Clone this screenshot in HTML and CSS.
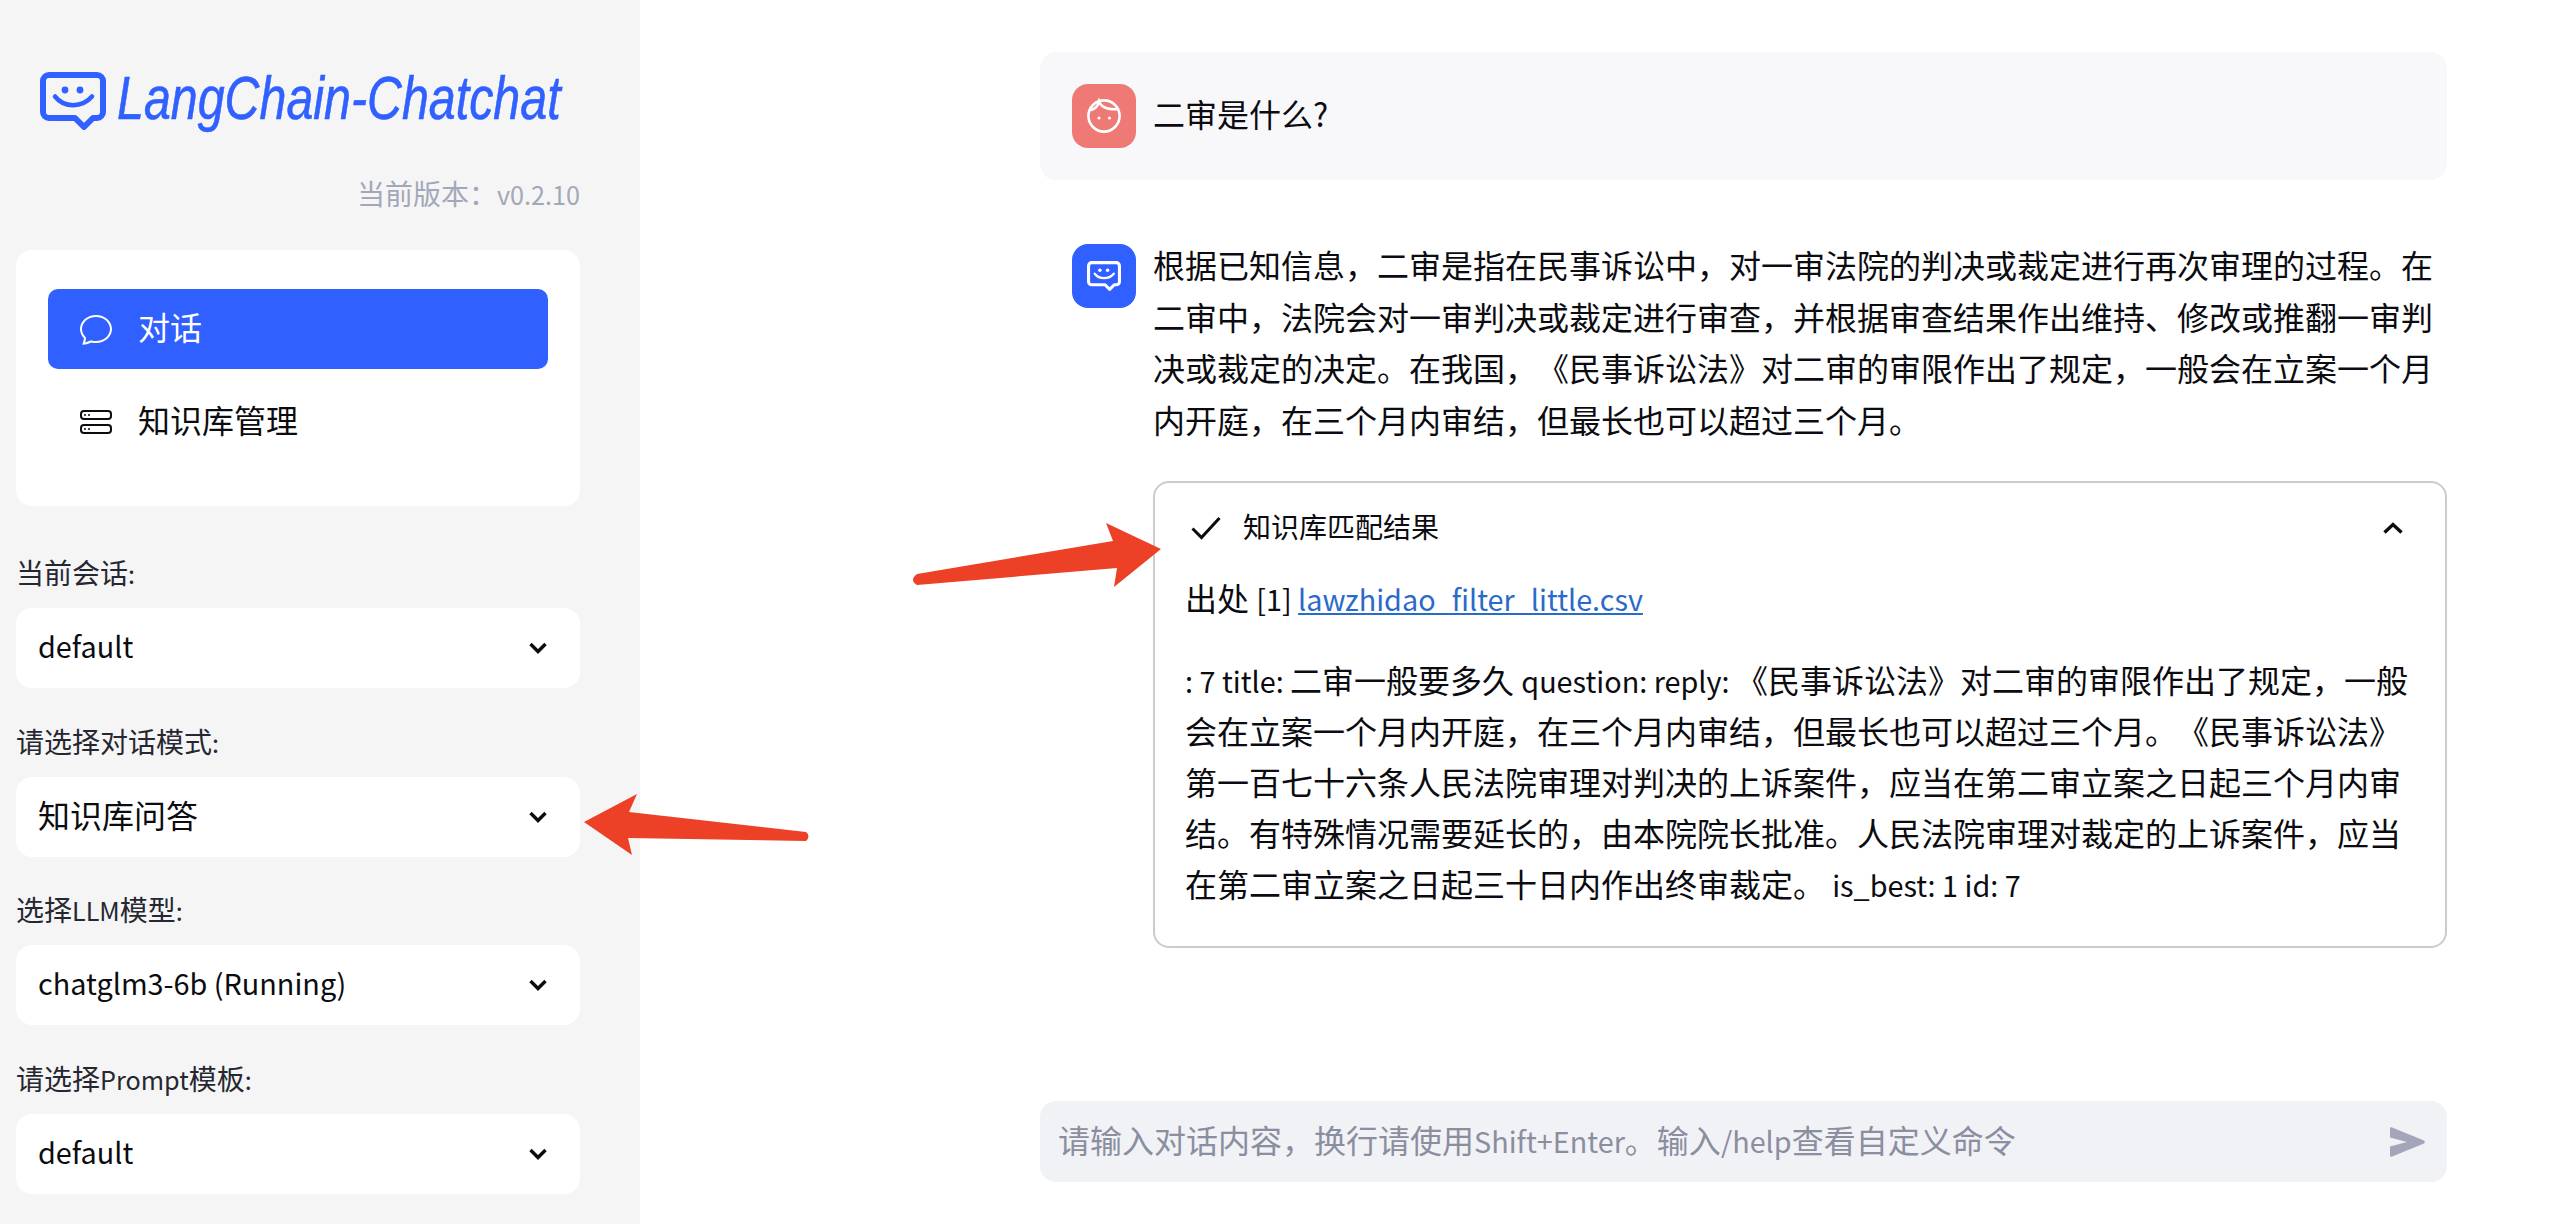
FILE: index.html
```html
<!DOCTYPE html>
<html lang="zh-CN">

<head>
    <meta charset="UTF-8">
    <title>LangChain-Chatchat</title>
    <link rel="stylesheet" href="styles.css">
</head>

<body>
    <svg class="defs" width="0" height="0">
        <symbol id="bot" viewBox="0 0 66 58">
            <path d="M9 3H57a6 6 0 0 1 6 6V40a6 6 0 0 1-6 6H53L44 55L35 46H9a6 6 0 0 1-6-6V9a6 6 0 0 1 6-6Z" fill="none" stroke="currentColor" stroke-width="6" stroke-linejoin="round"/>
            <circle cx="25" cy="18" r="3.4" fill="currentColor"/>
            <circle cx="40" cy="18" r="3.4" fill="currentColor"/>
            <path d="M15 24.5C24 36 42 36 52 24.5" fill="none" stroke="currentColor" stroke-width="4.5" stroke-linecap="round"/>
        </symbol>
        <symbol id="down" viewBox="0 0 20 14">
            <path d="M2.5 3L10 10.5L17.5 3" fill="none" stroke="currentColor" stroke-width="3.4"/>
        </symbol>
    </svg>

    <div class="app">
        <aside class="sidebar">
            <div class="logo">
                <svg class="logo-icon"><use href="#bot"/></svg>
                <span class="logo-text">LangChain-Chatchat</span>
            </div>
            <p class="version">当前版本：<span class="lat">v0.2.10</span></p>

            <nav class="nav-card">
                <a class="nav-item active">
                    <svg class="nav-icon" viewBox="0 0 16 16" fill="currentColor"><path d="M2.678 11.894a1 1 0 0 1 .287.801 10.97 10.97 0 0 1-.398 2c1.395-.323 2.247-.697 2.634-.893a1 1 0 0 1 .71-.074A8.06 8.06 0 0 0 8 14c3.996 0 7-2.807 7-6 0-3.192-3.004-6-7-6S1 4.808 1 8c0 1.468.617 2.83 1.678 3.894zm-.493 3.905a21.682 21.682 0 0 1-.713.129c-.2.032-.352-.176-.273-.362a9.68 9.68 0 0 0 .244-.637l.003-.01c.248-.72.45-1.548.524-2.319C.743 11.37 0 9.76 0 8c0-3.866 3.582-7 8-7s8 3.134 8 7-3.582 7-8 7a9.06 9.06 0 0 1-2.347-.306c-.52.263-1.639.742-3.468 1.105z"/></svg>
                    <span class="nav-text">对话</span>
                </a>
                <a class="nav-item">
                    <svg class="nav-icon" viewBox="0 0 16 16" fill="currentColor"><path d="M14 10a1 1 0 0 1 1 1v1a1 1 0 0 1-1 1H2a1 1 0 0 1-1-1v-1a1 1 0 0 1 1-1h12zM2 9a2 2 0 0 0-2 2v1a2 2 0 0 0 2 2h12a2 2 0 0 0 2-2v-1a2 2 0 0 0-2-2H2z"/><path d="M5 11.5a.5.5 0 1 1-1 0 .5.5 0 0 1 1 0zm-2 0a.5.5 0 1 1-1 0 .5.5 0 0 1 1 0zM14 3a1 1 0 0 1 1 1v1a1 1 0 0 1-1 1H2a1 1 0 0 1-1-1V4a1 1 0 0 1 1-1h12zM2 2a2 2 0 0 0-2 2v1a2 2 0 0 0 2 2h12a2 2 0 0 0 2-2V4a2 2 0 0 0-2-2H2z"/><path d="M5 4.5a.5.5 0 1 1-1 0 .5.5 0 0 1 1 0zm-2 0a.5.5 0 1 1-1 0 .5.5 0 0 1 1 0z"/></svg>
                    <span class="nav-text">知识库管理</span>
                </a>
            </nav>

            <div class="fields">
                <div class="field">
                    <label class="field-label">当前会话<span class="lat">:</span></label>
                    <div class="select"><span class="select-value lat">default</span><svg class="select-arrow"><use href="#down"/></svg></div>
                </div>
                <div class="field">
                    <label class="field-label">请选择对话模式<span class="lat">:</span></label>
                    <div class="select"><span class="select-value">知识库问答</span><svg class="select-arrow"><use href="#down"/></svg></div>
                </div>
                <div class="field">
                    <label class="field-label">选择<span class="lat">LLM</span>模型<span class="lat">:</span></label>
                    <div class="select"><span class="select-value lat">chatglm3-6b (Running)</span><svg class="select-arrow"><use href="#down"/></svg></div>
                </div>
                <div class="field">
                    <label class="field-label">请选择<span class="lat">Prompt</span>模板<span class="lat">:</span></label>
                    <div class="select"><span class="select-value lat">default</span><svg class="select-arrow"><use href="#down"/></svg></div>
                </div>
            </div>
        </aside>

        <main class="main">
            <div class="message user">
                <div class="avatar avatar-user">
                    <svg class="face" viewBox="0 0 36 36" fill="none" stroke="currentColor" stroke-width="2.6">
                        <circle cx="18" cy="18" r="15.6"/>
                        <path d="M5 12C9 11 12 8 13 3.5C15 9 22 12 31.5 11" stroke-linecap="round"/>
                        <circle cx="13" cy="20" r="1.6" fill="currentColor" stroke="none"/>
                        <circle cx="23.5" cy="20" r="1.6" fill="currentColor" stroke="none"/>
                    </svg>
                </div>
                <div class="message-text">二审是什么?</div>
            </div>

            <div class="message bot">
                <div class="avatar avatar-bot">
                    <svg class="bot-icon"><use href="#bot"/></svg>
                </div>
                <div class="message-body">
                    <p class="answer">根据已知信息，二审是指在民事诉讼中，对一审法院的判决或裁定进行再次审理的过程。在二审中，法院会对一审判决或裁定进行审查，并根据审查结果作出维持、修改或推翻一审判决或裁定的决定。在我国，《民事诉讼法》对二审的审限作出了规定，一般会在立案一个月内开庭，在三个月内审结，但最长也可以超过三个月。</p>

                    <section class="status-box">
                        <header class="status-head">
                            <svg class="check" viewBox="0 0 30 24" fill="none" stroke="currentColor" stroke-width="3"><path d="M1.5 12.5L10.5 21.5L28.5 2"/></svg>
                            <span class="status-title">知识库匹配结果</span>
                            <svg class="status-arrow" viewBox="0 0 20 12" fill="none" stroke="currentColor" stroke-width="3.4"><path d="M1.5 10.5L10 2.5L18.5 10.5"/></svg>
                        </header>
                        <p class="source">出处 <span class="lat">[1] </span><a class="source-link lat">lawzhidao_filter_little.csv</a></p>
                        <div class="quote">
                            <p class="quote-line"><span class="lat">: 7 title: </span>二审一般要多久 <span class="lat">question: reply: </span>《民事诉讼法》对二审的审限作出了规定，一般</p>
                            <p class="quote-line">会在立案一个月内开庭，在三个月内审结，但最长也可以超过三个月。《民事诉讼法》</p>
                            <p class="quote-line">第一百七十六条人民法院审理对判决的上诉案件，应当在第二审立案之日起三个月内审</p>
                            <p class="quote-line">结。有特殊情况需要延长的，由本院院长批准。人民法院审理对裁定的上诉案件，应当</p>
                            <p class="quote-line">在第二审立案之日起三十日内作出终审裁定。 <span class="lat">is_best: 1 id: 7</span></p>
                        </div>
                    </section>
                </div>
            </div>

            <div class="chat-input">
                <span class="placeholder">请输入对话内容，换行请使用<span class="lat">Shift+Enter</span>。输入<span class="lat">/help</span>查看自定义命令</span>
                <svg class="send" viewBox="0 0 35 30" fill="currentColor"><path d="M1.5 0.3L34 13.6Q35.5 15 34 16.4L1.5 29.7Q0 30 0 28.5V19.5L17 15L0 10.5V1.5Q0 0 1.5 0.3Z"/></svg>
            </div>
        </main>
    </div>

    <!-- red annotation arrows painted on top of the screenshot -->
    <svg class="annotations" viewBox="0 0 2558 1224">
        <path d="M584 822L637 794L629 812L806 832Q811 836 806 841L628 838L632 855Z"/>
        <path d="M1161 549L1106 523L1113 541L917 574Q909 580 917 585L1117 568L1114 587Z"/>
    </svg>
</body>

</html>
```

FILE: styles.css
```css
* {
    box-sizing: border-box;
}

body {
    margin: 0;
    background-color: white;
    color: #0b0b10;
    font-family: "Noto Sans CJK SC", "Noto Sans", sans-serif;
    font-size: 32px;
    text-spacing-trim: space-all;
}

p {
    margin: 0;
}

/* latin letters in the CJK face run about 10% larger than the original's */
.lat {
    font-size: 0.9em;
}

.defs {
    position: absolute;
}

.app {
    display: flex;
    height: 1224px;
    overflow: hidden;
}

/* sidebar */
.sidebar {
    flex: 0 0 640px;
    width: 640px;
    min-width: 0;
    padding: 72px 60px 0 16px;
    overflow: hidden;
    background-color: #f5f5f5;
}

.logo {
    display: flex;
    align-items: center;
    gap: 11px;
    height: 58px;
    padding-left: 24px;
    color: #3060ff;
}

.logo-icon {
    width: 66px;
    height: 58px;
    flex: none;
}

/* the real logo face is condensed, so squeeze the nearest installed italic */
.logo-text {
    margin-bottom: 6px;
    font-family: "Liberation Sans", sans-serif;
    font-style: italic;
    font-size: 62px;
    line-height: 58px;
    white-space: nowrap;
    transform: scaleX(0.78);
    transform-origin: left center;
    -webkit-text-stroke: 0.6px #3060ff;
}

.version {
    height: 40px;
    margin-top: 43px;
    color: #a3a8b8;
    font-size: 28px;
    line-height: 40px;
    text-align: right;
}

.nav-card {
    display: flex;
    flex-direction: column;
    gap: 13px;
    height: 256px;
    margin-top: 37px;
    padding: 39px 32px 0;
    background-color: white;
    border-radius: 16px;
}

.nav-item {
    display: flex;
    align-items: center;
    gap: 26px;
    height: 80px;
    padding-left: 32px;
    border-radius: 10px;
}

.nav-item.active {
    background-color: #3060ff;
    color: white;
}

.nav-icon {
    width: 32px;
    height: 32px;
    flex: none;
}

.nav-text {
    margin-bottom: 7px;
}

.fields {
    display: flex;
    flex-direction: column;
    gap: 35.7px;
    margin-top: 49px;
}

.field-label {
    display: block;
    height: 40px;
    margin-top: -3px;
    margin-bottom: 16px;
    color: #262730;
    font-size: 28px;
    line-height: 40px;
}

.select {
    display: flex;
    align-items: center;
    justify-content: space-between;
    height: 80px;
    padding: 0 32px 0 22px;
    background-color: white;
    border-radius: 16px;
}

.select-value {
    margin-bottom: 5px;
}

.select-value.lat {
    margin-bottom: 5px;
}

.select-arrow {
    width: 20px;
    height: 14px;
}

/* chat area */
.main {
    flex: 1;
    min-width: 0;
    display: flex;
    flex-direction: column;
    padding: 52px 111px 42px 400px;
}

.message {
    display: flex;
    gap: 17px;
    padding: 0 0 0 32px;
}

.message.user {
    align-items: center;
    height: 128px;
    background-color: #f8f8fa;
    border-radius: 16px;
}

.message-text {
    margin-bottom: 7px;
}

.message.bot {
    margin-top: 64px;
}

.avatar {
    display: flex;
    align-items: center;
    justify-content: center;
    width: 64px;
    height: 64px;
    flex: none;
    border-radius: 16px;
    color: white;
}

.avatar-user {
    background-color: #ee7975;
}

.avatar-bot {
    background-color: #3060ff;
}

.face {
    width: 36px;
    height: 36px;
}

.bot-icon {
    width: 34px;
    height: 30px;
}

.message-body {
    flex: 1;
    min-width: 0;
    margin-top: -5px;
}

.answer {
    height: 207px;
    line-height: 51.7px;
}

.status-box {
    height: 467px;
    margin-top: 35px;
    padding: 0 30px;
    border: 2px solid #cccccc;
    border-radius: 16px;
}

.status-head {
    display: flex;
    align-items: center;
    height: 90px;
    padding: 0 12px 0 6px;
}

.check {
    width: 30px;
    height: 24px;
    flex: none;
}

.status-title {
    flex: 1;
    margin-bottom: 4px;
    margin-left: 22px;
    font-size: 28px;
}

.status-arrow {
    width: 20px;
    height: 12px;
    flex: none;
}

.source {
    height: 52px;
    margin-top: -2px;
    line-height: 52px;
}

.source-link {
    color: #2a6acb;
    text-decoration: underline;
}

.quote {
    margin-top: 31px;
}

.quote-line {
    height: 51px;
    line-height: 51px;
    white-space: nowrap;
}

.chat-input {
    display: flex;
    align-items: center;
    justify-content: space-between;
    height: 81px;
    margin-top: auto;
    padding: 0 22px 0 18px;
    background-color: #f0f2f6;
    border-radius: 16px;
    color: #8b8e9e;
}

.placeholder {
    margin-bottom: 5px;
}

.send {
    width: 35px;
    height: 30px;
    color: #a3a6b8;
}

/* annotation overlay */
.annotations {
    position: absolute;
    top: 0;
    left: 0;
    width: 2558px;
    height: 1224px;
    fill: #ec4126;
    pointer-events: none;
}
```
